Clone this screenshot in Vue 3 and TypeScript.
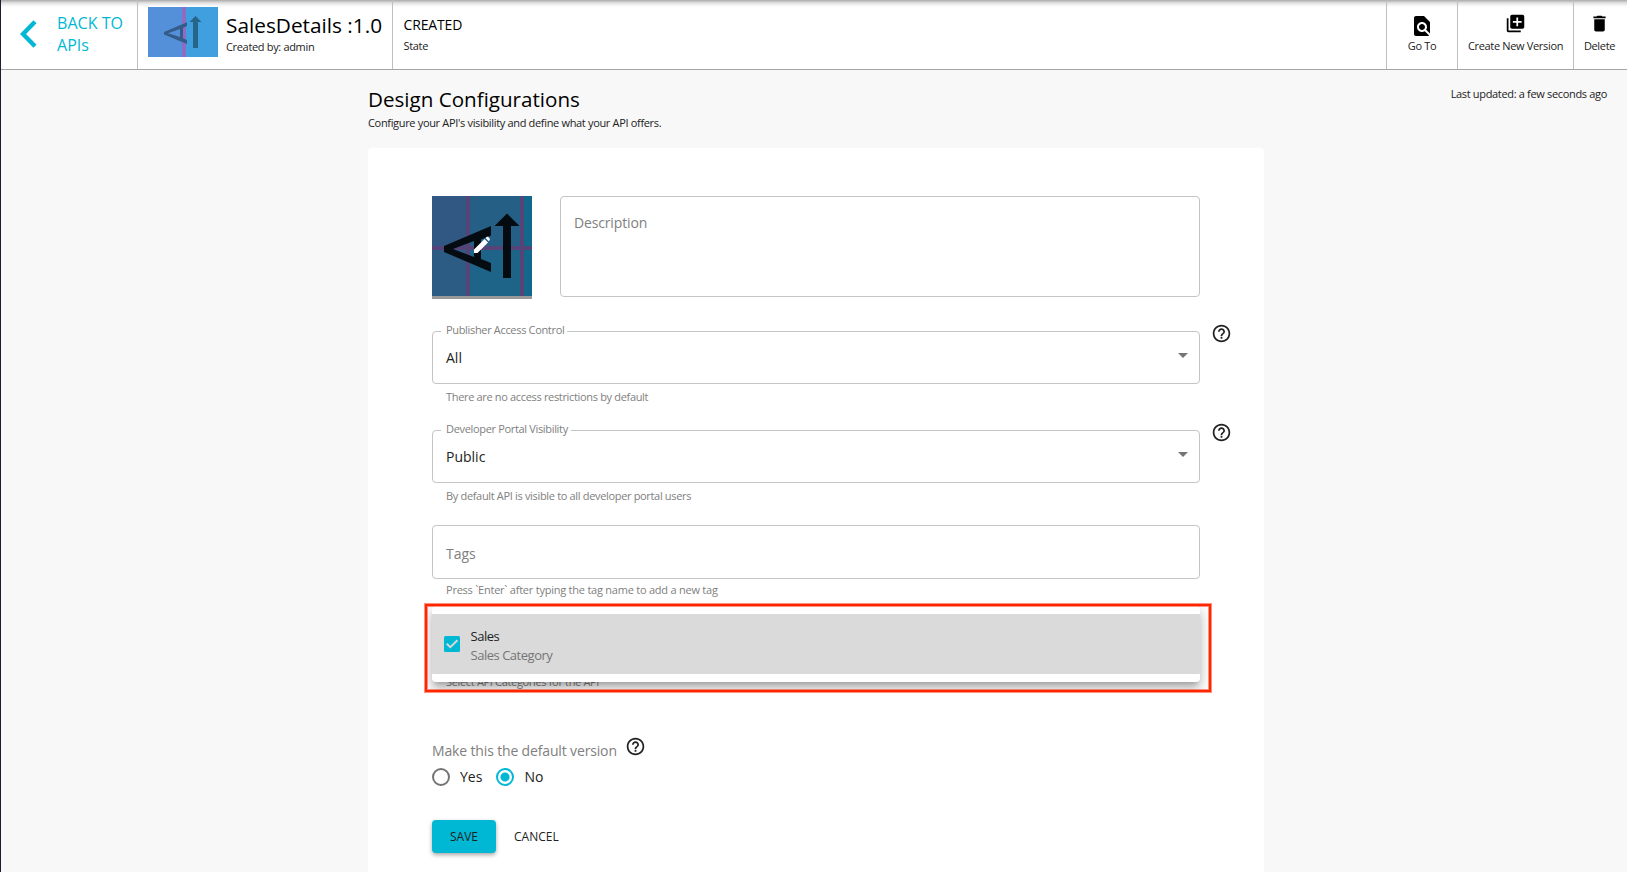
<script setup lang="ts">
import { ref } from 'vue'

interface SelectField {
  label: string
  value: string
  helper: string
}

const selects: SelectField[] = [
  { label: 'Publisher Access Control', value: 'All', helper: 'There are no access restrictions by default' },
  { label: 'Developer Portal Visibility', value: 'Public', helper: 'By default API is visible to all developer portal users' },
]

const actions = [
  { name: 'Go To', cls: 'goto', size: 24, icon: 'M20 19.59V8l-6-6H6c-1.1 0-1.99.9-1.99 2L4 20c0 1.1.89 2 1.99 2H18c.45 0 .85-.15 1.19-.4l-4.43-4.43c-.8.52-1.74.83-2.76.83-2.76 0-5-2.24-5-5s2.24-5 5-5 5 2.24 5 5c0 1.02-.31 1.96-.83 2.75L20 19.59zM9 13c0 1.66 1.34 3 3 3s3-1.34 3-3-1.34-3-3-3-3 1.34-3 3z' },
  { name: 'Create New Version', cls: 'version', size: 21, icon: 'M4 6H2v14c0 1.1.9 2 2 2h14v-2H4V6zm16-4H8c-1.1 0-2 .9-2 2v12c0 1.1.9 2 2 2h12c1.1 0 2-.9 2-2V4c0-1.1-.9-2-2-2zm-1 9h-4v4h-2v-4H9V9h4V5h2v4h4v2z' },
  { name: 'Delete', cls: 'delete', size: 21, icon: 'M6 19c0 1.1.9 2 2 2h8c1.1 0 2-.9 2-2V7H6v12zM19 4h-3.5l-1-1h-5l-1 1H5v2h14V4z' },
]

const helpPath = 'M11 18h2v-2h-2v2zm1-16C6.48 2 2 6.48 2 12s4.48 10 10 10 10-4.48 10-10S17.52 2 12 2zm0 18c-4.41 0-8-3.59-8-8s3.59-8 8-8 8 3.59 8 8-3.59 8-8 8zm0-14c-2.21 0-4 1.79-4 4h2c0-1.1.9-2 2-2s2 .9 2 2c0 2-3 1.75-3 5h2c0-2.25 3-2.5 3-5 0-2.21-1.79-4-4-4z'

const isDefault = ref<'Yes' | 'No'>('No')
</script>

<template>
  <div class="page">
    <header class="topbar">
      <a class="back">
        <svg class="chevron" viewBox="0 0 17 28"><path d="M15 1.7 3 14 15 26.3" fill="none" stroke="#00b8d4" stroke-width="4.4" /></svg>
        <span class="back-text">BACK TO<br />APIs</span>
      </a>
      <div class="api">
        <svg class="thumb" viewBox="0 0 70 50">
          <rect width="70" height="50" fill="#3f9fdf" />
          <rect width="34" height="50" fill="#5490d9" />
          <rect x="34" width="4" height="50" fill="#8e6cc4" />
          <path fill="#335c88" fill-rule="evenodd" d="M16 25 39 15.300V19L35 20.700V31.300L39 33V37L16 27.500ZM20 26.200 32 30V22Z" />
          <path fill="#266488" d="M47.500 9 53.500 15H50V41H45V15H41.500Z" />
        </svg>
        <div>
          <div class="api-name">SalesDetails :1.0</div>
          <div class="caption">Created by: admin</div>
        </div>
      </div>
      <div class="state">
        <div class="state-name">CREATED</div>
        <div class="caption">State</div>
      </div>
      <div class="actions">
        <div v-for="a in actions" :key="a.name" class="action" :class="a.cls">
          <svg viewBox="0 0 24 24" :width="a.size" :height="a.size"><path :d="a.icon" /></svg>
          <span class="caption">{{ a.name }}</span>
        </div>
      </div>
    </header>

    <main class="content">
      <div class="updated caption">Last updated: a few seconds ago</div>
      <h1 class="title">Design Configurations</h1>
      <p class="subtitle caption">Configure your API's visibility and define what your API offers.</p>

      <section class="card">
        <div class="intro">
          <svg class="image" viewBox="0 0 100 103">
            <rect y="100" width="100" height="3" fill="#999" />
            <rect width="100" height="100" fill="#206288" />
            <rect width="34" height="100" fill="#315882" />
            <rect y="52" width="34" height="48" fill="#2c5c84" />
            <rect x="38" y="54" width="50" height="46" fill="#1d6488" />
            <rect x="38" width="50" height="50" fill="#265f86" />
            <rect x="92" width="8" height="100" fill="#12688a" />
            <g fill="#564378">
              <rect x="34" width="4" height="100" />
              <rect x="88" width="4" height="100" />
              <rect y="50" width="100" height="4" />
            </g>
            <g fill="#040c12">
              <path fill-rule="evenodd" d="M12 50 59 30V39.500L49 43.500V63L59 67V76L12 56ZM21 53 42 61V45Z" />
              <path d="M75 17.500 87.500 30H79V82H71V30H62.500Z" />
            </g>
            <path fill="#fff" d="M42 53.500 52.500 43 56 46.500 45.500 57H42ZM53.500 42 55 40.800H56L57.800 42.800V43.800L56.800 45.300Z" />
          </svg>
          <div class="description">Description</div>
        </div>

        <div v-for="s in selects" :key="s.label" class="field">
          <div class="control">
            <fieldset class="outlined">
              <legend>{{ s.label }}</legend>
              <div class="value">
                <span>{{ s.value }}</span>
                <svg viewBox="0 0 24 24" class="arrow"><path d="M7 10l5 5 5-5z" /></svg>
              </div>
            </fieldset>
            <svg class="help" viewBox="0 0 24 24"><path :d="helpPath" /></svg>
          </div>
          <div class="helper">{{ s.helper }}</div>
        </div>

        <div class="tags">Tags</div>
        <div class="helper tags-helper">Press `Enter` after typing the tag name to add a new tag</div>

        <div class="categories">
          <div class="helper categories-helper">Select API Categories for the API</div>
          <div class="highlight">
            <div class="menu">
              <div class="option">
                <svg class="check" viewBox="0 0 16 16"><rect width="16" height="16" rx="1.5" fill="#00b8d4" /><path d="M2.800 7.800 6.300 11.200 13.400 4.300" fill="none" stroke="#dadada" stroke-width="1.900" /></svg>
                <div class="option-text"><div class="option-name">Sales</div><div class="option-desc">Sales Category</div></div>
              </div>
            </div>
          </div>
        </div>

        <div class="default-label">
          <span>Make this the default version</span>
          <svg class="help" viewBox="0 0 24 24"><path :d="helpPath" /></svg>
        </div>
        <div class="radios">
          <label class="radio" @click="isDefault = 'Yes'"><i :class="{ on: isDefault === 'Yes' }"></i>Yes</label>
          <label class="radio" @click="isDefault = 'No'"><i :class="{ on: isDefault === 'No' }"></i>No</label>
        </div>
        <div class="buttons">
          <button class="save">SAVE</button>
          <button class="cancel">CANCEL</button>
        </div>
      </section>
    </main>
  </div>
</template>

<style>
body { background: #f8f8f8; }
</style>

<style scoped>
.page { box-sizing: border-box; height: 872px; overflow: hidden; border-left: 1px solid #1a1f2f; background: #f8f8f8; color: #000; font-family: "Open Sans", "Noto Sans", sans-serif; }
.topbar { box-sizing: border-box; display: flex; height: 70px; background: linear-gradient(#aaa, #e2e2e2 3px, #fafafa 6px, #fff 8px); border-bottom: 1px solid #a5a5a5; }
.back { box-sizing: border-box; display: flex; width: 137px; padding: 12px 0 0 19px; border-right: 1px solid #bfbfbf; color: #00b8d4; }
.chevron { width: 17px; height: 28px; margin-top: 8px; }
.back-text { margin-left: 20px; font-size: 16px; line-height: 22px; letter-spacing: .04px; white-space: nowrap; }
.api { box-sizing: border-box; display: flex; width: 255px; padding: 7px 0 0 10px; border-right: 1px solid #bfbfbf; }
.thumb { width: 70px; height: 50px; margin-right: 8px; }
.api-name { margin-top: 5px; font-size: 20.8px; line-height: 27px; white-space: nowrap; }
.caption { font-size: 11px; line-height: 16px; letter-spacing: -.33px; color: #222; white-space: nowrap; }
.state { padding: 15px 0 0 10.5px; }
.state-name { font-size: 14px; line-height: 20px; margin-bottom: 3px; letter-spacing: -.15px; }
.actions { display: flex; margin-left: auto; }
.action { box-sizing: border-box; display: flex; flex-direction: column; align-items: center; border-left: 1px solid #bfbfbf; }
.goto { width: 71px; padding-top: 14px; }
.version { width: 116px; padding-top: 13px; }
.version .caption, .delete .caption { margin-top: 4px; }
.delete { width: 54px; padding: 13px 2px 0 0; }
.content { display: flex; flex-direction: column; padding: 16px 20px 0 367px; }
.updated { height: 0; align-self: flex-end; }
.title { margin: -1px 0 0; font-size: 20.6px; font-weight: 400; line-height: 28px; }
.subtitle { margin: 2px 0 0; }
.card { box-sizing: border-box; width: 896px; height: 800px; margin-top: 17px; padding: 48px 64px; border-radius: 4px; background: #fff; }
.intro { display: flex; gap: 28px; height: 135px; }
.image { width: 100px; height: 103px; }
.description { box-sizing: border-box; width: 640px; height: 101px; padding: 16px 13px; border: 1px solid #c4c4c4; border-radius: 4px; color: #808080; font-size: 14px; line-height: 20px; letter-spacing: -.15px; }
.field { height: 99px; }
.control { display: flex; width: 810px; height: 53px; }
.outlined { box-sizing: border-box; flex: none; width: 768px; height: 61px; margin: -8px 0 0; padding: 0 12px 0 8px; border: 1px solid #c4c4c4; border-radius: 4px; }
.outlined legend { height: 16px; padding: 0 3px 0 5px; font-size: 11px; line-height: 14px; letter-spacing: -.33px; color: #808080; }
.value { display: flex; justify-content: space-between; padding: 9px 0 0 5px; font-size: 14px; line-height: 20px; color: #222; }
.arrow { width: 24px; height: 24px; margin: -5px -7.5px 0 0; fill: #757575; }
.help { flex: none; width: 21px; height: 21px; fill: #222; }
.control .help { margin: -8px 0 0 11px; }
.helper { margin-top: 5px; padding-left: 14px; color: #808080; font-size: 11px; line-height: 16px; letter-spacing: -.33px; }
.tags { box-sizing: border-box; height: 54px; margin-top: -4px; padding: 18px 13px; border: 1px solid #c4c4c4; border-radius: 4px; font-size: 14px; line-height: 20px; color: #808080; }
.tags-helper { margin-top: 3px; letter-spacing: -.23px; }
.categories { position: relative; height: 143px; }
.categories-helper { margin: 0; padding-top: 76px; }
.highlight { box-sizing: border-box; position: absolute; left: -7px; top: 6px; width: 786px; height: 88px; border: 2px solid #ff2600; box-shadow: 0 0 0 1px rgba(255,38,0,.5); overflow: hidden; }
.highlight::after { content: ""; position: absolute; inset: 0; border: 1px solid rgba(255,38,0,.5); }
.menu { box-sizing: border-box; height: 76px; margin-left: 5px; width: 768px; padding: 8px 0; border-radius: 4px; background: #fff; box-shadow: 0 5px 5px -3px rgba(0,0,0,.2), 0 8px 10px 1px rgba(0,0,0,.14), 0 3px 14px 2px rgba(0,0,0,.12); }
.option { display: flex; align-items: center; height: 60px; padding-left: 11.5px; background: #dadada; }
.check { width: 16px; height: 16px; margin-right: 11px; }
.option-text { margin-top: 3px; }
.option-name, .option-desc { font-size: 13px; line-height: 19px; letter-spacing: -.48px; color: #222; }
.option-desc { color: #757575; }
.default-label { display: flex; height: 26px; font-size: 14px; line-height: 20px; letter-spacing: -.15px; color: #808080; }
.default-label .help { margin: -5px 0 0 8px; }
.radios { display: flex; gap: 14px; }
.radio { display: flex; align-items: center; gap: 10px; font-size: 14px; line-height: 20px; color: #222; }
.radio i { box-sizing: border-box; width: 18px; height: 18px; border: 2px solid #757575; border-radius: 50%; }
.radio .on { border-color: #00b8d4; background: radial-gradient(circle, #00b8d4 4px, transparent 5px); }
.buttons { display: flex; gap: 18px; margin-top: 33px; }
button { border: 0; padding: 0; background: none; font: 12px/33px "Open Sans", sans-serif; color: #222; }
.save { width: 64px; height: 33px; border-radius: 4px; background: #00b8d4; box-shadow: 0 2px 4px rgba(0,0,0,.35); }
</style>
